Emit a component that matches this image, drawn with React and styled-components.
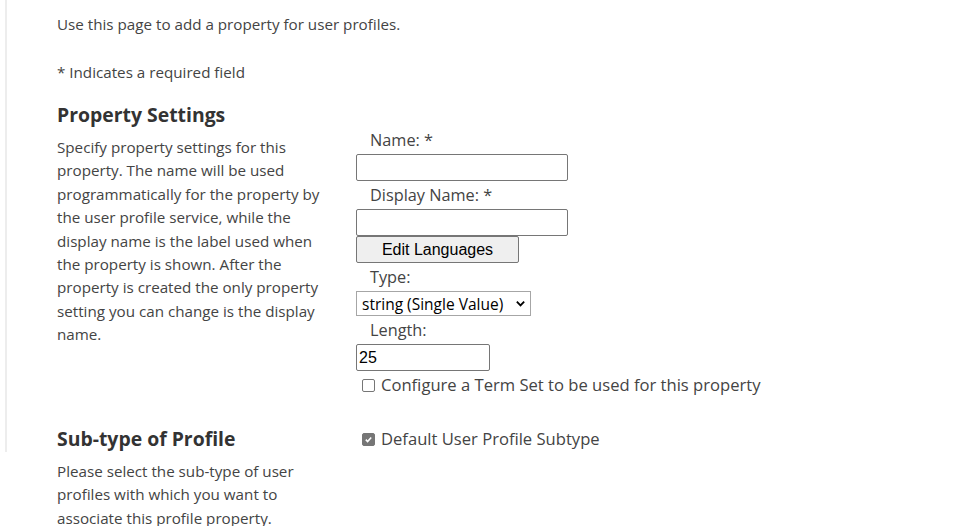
import React from 'react';
import styled, { createGlobalStyle } from 'styled-components';

const GlobalStyle = createGlobalStyle`
  body {
    margin: 0;
    background: #fff;
    font-family: "Open Sans", "Noto Sans", sans-serif;
    color: #444;
  }
`;

const Page = styled.div`
  min-height: 526px;
  padding: 12px 0 0 57px;
  box-sizing: border-box;
  background: linear-gradient(#ededed, #ededed) no-repeat 5px 0 / 2px 452px;
`;

const Intro = styled.p`
  margin: 0;
  font-size: 15.2px;
  line-height: 24px;
  & + & {
    margin-top: 24px;
  }
`;

const Section = styled.div`
  display: flex;
  margin-top: ${p => p.$gap || 0}px;
`;

const Side = styled.div`
  width: 272px;
  flex-shrink: 0;
  margin-right: 27px;
  h3 {
    margin: 0;
    font-size: 19.4px;
    font-weight: 700;
    color: #333;
    line-height: 26px;
  }
  p {
    margin: 8px 0 0;
    font-size: 15.2px;
    line-height: 23.4px;
  }
`;

const Fields = styled.div`
  display: flex;
  flex-direction: column;
  align-items: flex-start;
  padding-top: ${p => p.$top || 0}px;
`;

const Label = styled.label`
  font-size: 16.3px;
  line-height: 20px;
  padding-left: 14px;
  margin: 4px 0;
`;

const TextBox = styled.input`
  box-sizing: border-box;
  width: ${p => p.$w}px;
  height: 27px;
  border: 1px solid #767676;
  border-radius: 2px;
  padding: 1px 2px;
  font: 16px "Liberation Sans", Arial, sans-serif;
  color: #000;
  margin: 0;
`;

const Button = styled.button`
  box-sizing: border-box;
  width: 163px;
  height: 27px;
  background: #efefef;
  border: 1px solid #767676;
  border-radius: 2px;
  font: 16px "Liberation Sans", Arial, sans-serif;
  color: #000;
  padding: 0;
`;

const SelectBox = styled.div`
  box-sizing: border-box;
  width: 175px;
  height: 25px;
  border: 1px solid #a6a6a6;
  display: flex;
  align-items: center;
  justify-content: space-between;
  padding: 0 4px 0 5px;
  font-size: 15.5px;
  color: #000;
  svg {
    width: 11px;
    height: 11px;
  }
`;

const Check = styled.label`
  display: flex;
  align-items: center;
  line-height: 22px;
  margin: ${p => p.$m || '4px 0 0 6px'};
  font-size: 16.6px;
  color: #444;
`;

const Box = styled.span`
  box-sizing: border-box;
  width: 13px;
  height: 13px;
  border-radius: 2px;
  margin-right: 6px;
  display: inline-flex;
  align-items: center;
  justify-content: center;
  border: 1px solid #767676;
  background: ${p => (p.$on ? '#767676' : '#fff')};
  svg {
    width: 9px;
    height: 9px;
  }
`;

export default function App() {
  return (
    <>
      <GlobalStyle />
      <Page>
        <Intro>Use this page to add a property for user profiles.</Intro>
        <Intro>* Indicates a required field</Intro>
        <Section $gap={18}>
          <Side>
            <h3>Property Settings</h3>
            <p>
              Specify property settings for this property. The name will be used
              programmatically for the property by the user profile service, while the
              display name is the label used when the property is shown. After the
              property is created the only property setting you can change is the display
              name.
            </p>
          </Side>
          <Fields $top={24}>
            <Label>Name: *</Label>
            <TextBox $w={212} />
            <Label>Display Name: *</Label>
            <TextBox $w={212} />
            <Button>Edit Languages</Button>
            <Label>Type:</Label>
            <SelectBox>
              <span>string (Single Value)</span>
              <svg viewBox="0 0 12 12">
                <path d="M2 4l4 4 4-4" fill="none" stroke="#000" strokeWidth="2" />
              </svg>
            </SelectBox>
            <Label>Length:</Label>
            <TextBox $w={134} defaultValue="25" />
            <Check $m="3px 0 0 6px">
              <Box />
              Configure a Term Set to be used for this property
            </Check>
          </Fields>
        </Section>
        <Section $gap={30}>
          <Side>
            <h3>Sub-type of Profile</h3>
            <p>
              Please select the sub-type of user profiles with which you want to
              associate this profile property.
            </p>
          </Side>
          <Fields>
            <Check $m="2px 0 0 6px">
              <Box $on>
                <svg viewBox="0 0 10 10">
                  <path d="M2 5.2l2 2 4-4.4" fill="none" stroke="#fff" strokeWidth="1.8" />
                </svg>
              </Box>
              Default User Profile Subtype
            </Check>
          </Fields>
        </Section>
      </Page>
    </>
  );
}
